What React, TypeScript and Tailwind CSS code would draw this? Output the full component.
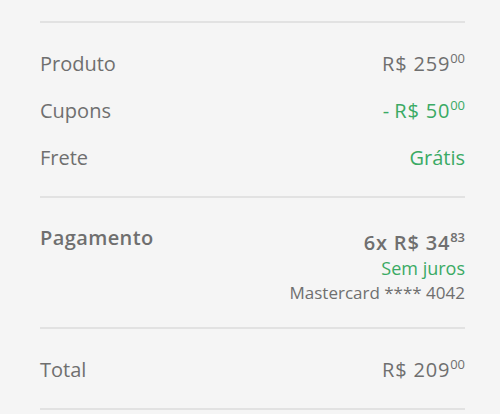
import React from 'react';

const Price: React.FC<{ main: string; cents: string }> = ({ main, cents }) => (
  <span className="tracking-[0.8px]">
    {main}
    <span className="text-[13px] align-[8px] tracking-normal">{cents}</span>
  </span>
);

const Divider = () => <div className="h-[2px] bg-[#e2e2e2]" />;

const Row: React.FC<{ label: string; children: React.ReactNode; green?: boolean }> = ({ label, children, green }) => (
  <div className="flex justify-between items-center h-[47px]">
    <span>{label}</span>
    <span className={green ? 'text-[#3aaa64]' : ''}>{children}</span>
  </div>
);

export default function App() {
  return (
    <div
      className="w-[500px] h-[414px] bg-[#f5f5f5] pl-10 pr-[35px] pt-[21px] text-[#6f6f6f] text-[20px] overflow-hidden"
      style={{ fontFamily: '"Open Sans", Lato, sans-serif' }}
    >
      <Divider />
      <div className="pt-[17px] pb-[15px]">
        <Row label="Produto">
          <Price main="R$ 259" cents="00" />
        </Row>
        <Row label="Cupons" green>
          - <Price main="R$ 50" cents="00" />
        </Row>
        <Row label="Frete" green>
          Grátis
        </Row>
      </div>
      <Divider />
      <div className="flex justify-between pt-[26px] pb-[22px]">
        <span className="font-semibold leading-[27px] tracking-[0.4px]">Pagamento</span>
        <div className="flex flex-col items-end">
          <span className="font-semibold leading-[27px]">
            <Price main="6x R$ 34" cents="83" />
          </span>
          <span className="text-[18px] text-[#3aaa64] leading-[25px]">Sem juros</span>
          <span className="text-[17px] leading-[24px]">Mastercard **** 4042</span>
        </div>
      </div>
      <Divider />
      <div className="flex justify-between items-center h-[79px] pt-[2px]">
        <span>Total</span>
        <Price main="R$ 209" cents="00" />
      </div>
      <Divider />
    </div>
  );
}
